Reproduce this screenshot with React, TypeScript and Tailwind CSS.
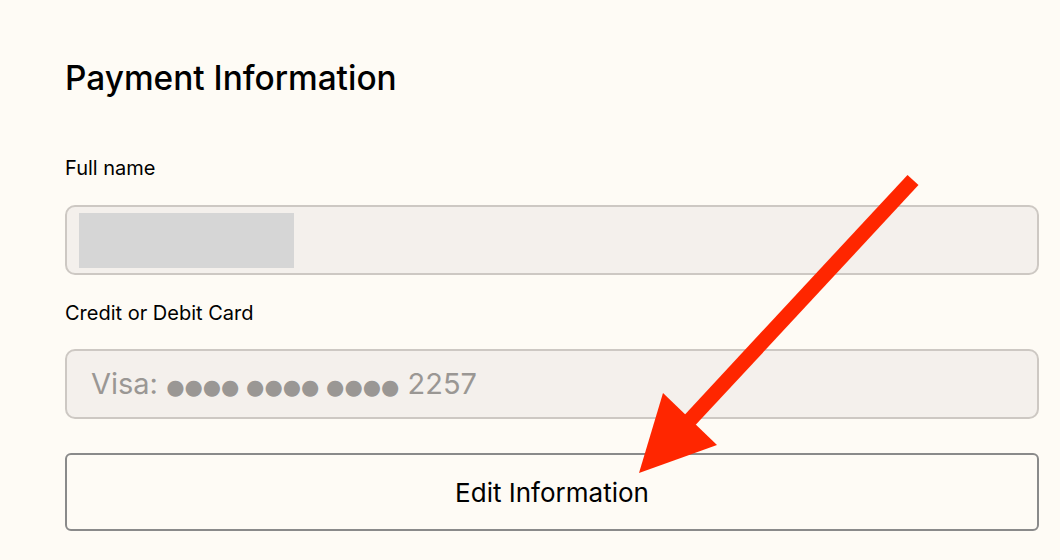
import React from 'react';

const font = { fontFamily: 'Inter, "Noto Sans", sans-serif' };

const Arrow: React.FC = () => (
  <svg className="pointer-events-none absolute left-0 top-0" width="1060" height="560" viewBox="0 0 1060 560">
    <line x1="913" y1="180" x2="690" y2="420" stroke="#ff2600" strokeWidth="15" />
    <polygon points="663,393 717,445 639,473" fill="#ff2600" />
  </svg>
);

const App: React.FC = () => {
  return (
    <div className="relative h-[560px] w-[1060px] overflow-hidden bg-[#fefbf5] text-black" style={font}>
      <div className="flex flex-col pl-[65px] pr-[21px] pt-[56px]">
        <h1 className="text-[33.4px] font-medium leading-[44px]">Payment Information</h1>

        <label className="mt-[56px] text-[20px] leading-[24px]">Full name</label>
        <div className="mt-[25px] flex h-[70px] items-center rounded-[10px] border-2 border-[#cdc8c3] bg-[#f4f0ec] px-[12px]">
          <div className="h-[55px] w-[215px] bg-[#d6d6d6]" />
        </div>

        <label className="mt-[26px] text-[20px] leading-[24px]">Credit or Debit Card</label>
        <div className="mt-[24px] flex h-[70px] items-center rounded-[10px] border-2 border-[#cdc8c3] bg-[#f4f0ec] px-[24px]">
          <span className="text-[29px] text-[#9a9794]">
            Visa: <span style={{ fontFamily: '"DejaVu Sans", sans-serif' }} className="text-[21px]">●●●● ●●●● ●●●●</span> 2257
          </span>
        </div>

        <button className="mt-[34px] flex h-[78px] items-center justify-center rounded-[6px] border-2 border-[#8a8a8a] text-[26px]">
          Edit Information
        </button>
      </div>
      <Arrow />
    </div>
  );
};

export default App;
